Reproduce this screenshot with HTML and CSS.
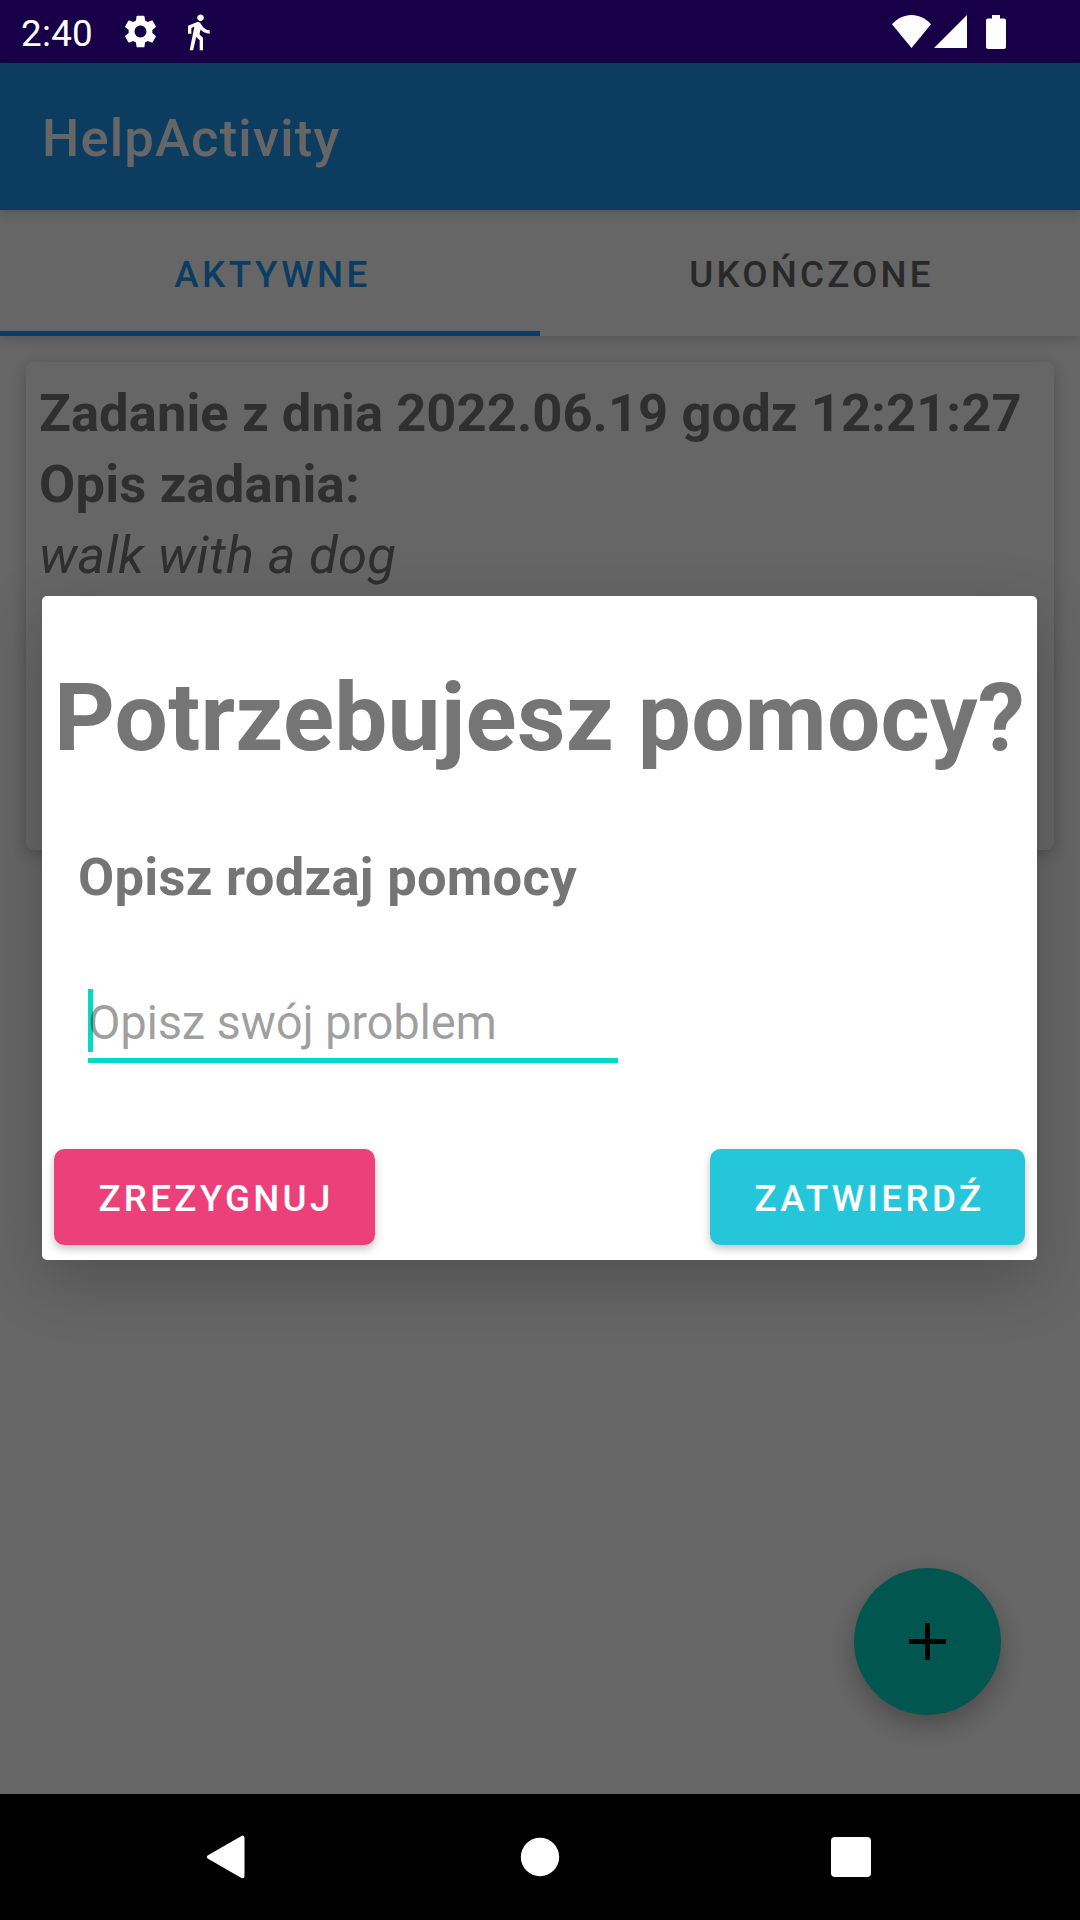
FILE: index.html
```html
<!DOCTYPE html>
<html lang="pl">
<head>
<meta charset="utf-8">
<title>HelpActivity</title>
<link rel="stylesheet" href="styles.css">
</head>
<body>
<div class="screen">
  <header class="status-bar">
    <span class="clock">2:40</span>
    <svg class="gear" viewBox="2 2 20 20"><path d="M19.14 12.94c.04-.3.06-.61.06-.94 0-.32-.02-.64-.07-.94l2.03-1.58c.18-.14.23-.41.12-.61l-1.92-3.32c-.12-.22-.37-.29-.59-.22l-2.39.96c-.5-.38-1.03-.7-1.62-.94l-.36-2.54c-.04-.24-.24-.41-.48-.41h-3.84c-.24 0-.43.17-.47.41l-.36 2.54c-.59.24-1.13.57-1.62.94l-2.39-.96c-.22-.08-.47 0-.59.22L2.74 8.87c-.12.21-.08.47.12.61l2.03 1.58c-.05.3-.09.63-.09.94s.02.64.07.94l-2.03 1.58c-.18.14-.23.41-.12.61l1.92 3.32c.12.22.37.29.59.22l2.39-.96c.5.38 1.03.7 1.62.94l.36 2.54c.05.24.24.41.48.41h3.84c.24 0 .44-.17.47-.41l.36-2.54c.59-.24 1.13-.56 1.62-.94l2.39.96c.22.08.47 0 .59-.22l1.92-3.32c.12-.22.07-.47-.12-.61l-2.01-1.58zM12 15.6c-1.98 0-3.6-1.62-3.6-3.6s1.62-3.6 3.6-3.6 3.6 1.62 3.6 3.6-1.62 3.6-3.6 3.6z"/></svg>
    <svg class="walk" viewBox="0 0 24 24"><path d="M13.5 5.5c1.1 0 2-.9 2-2s-.9-2-2-2-2 .9-2 2 .9 2 2 2zM9.8 8.9L7 23h2.1l1.8-8 2.1 2v6h2v-7.500l-2.1-2 .6-3C14.800 12 16.800 13 19 13v-2c-1.900 0-3.500-1-4.300-2.400l-1-1.600c-.4-.6-1-1-1.700-1-.3 0-.5.1-.8.1L6 8.300V13h2V9.600l1.800-.7"/></svg>
    <div class="indicators">
      <svg class="wifi" viewBox="0 0 39 33"><path d="M0 9.300C5 3.500 12 0 19.500 0S34 3.500 39 9.300L19.500 33z"/></svg>
      <svg class="signal" viewBox="0 0 33 33"><path d="M0 33L33 0v33z"/></svg>
      <svg class="battery" viewBox="0 0 20 34"><path d="M6 0h8v3.400h4q2 0 2 2V32q0 2-2 2H2q-2 0-2-2V5.400q0-2 2-2h4z"/></svg>
    </div>
  </header>

  <div class="window">
    <main class="activity">
      <div class="app-bar"><h1 class="app-title">HelpActivity</h1></div>
      <nav class="tabs">
        <div class="tab tab-active">AKTYWNE</div>
        <div class="tab">UKOŃCZONE</div>
      </nav>
      <div class="content">
        <article class="card">
          <p class="card-date">Zadanie z dnia 2022.06.19 godz 12:21:27</p>
          <p class="card-heading">Opis zadania:</p>
          <p class="card-note">walk with a dog</p>
        </article>
      </div>
      <div class="fab"><svg class="plus" viewBox="0 0 37 37"><path d="M16 0h5v16h16v5H21v16h-5V21H0v-5h16z"/></svg></div>
    </main>
    <div class="scrim">
      <section class="dialog">
        <h2 class="dialog-title">Potrzebujesz pomocy?</h2>
        <p class="dialog-label">Opisz rodzaj pomocy</p>
        <div class="field"><span class="hint">Opisz swój problem</span></div>
        <div class="actions">
          <div class="button button-cancel">ZREZYGNUJ</div>
          <div class="button button-confirm">ZATWIERDŹ</div>
        </div>
      </section>
    </div>
  </div>

  <footer class="nav-bar">
    <svg class="nav-icon" viewBox="0 0 44 44"><path d="M5 22L38.500 2.700v38.600z" stroke="#fff" stroke-width="4" stroke-linejoin="round"/></svg>
    <svg class="nav-icon" viewBox="0 0 44 44"><circle cx="22" cy="22" r="19.200"/></svg>
    <svg class="nav-icon" viewBox="0 0 44 44"><rect x="2" y="2" width="40" height="40" rx="4"/></svg>
  </footer>
</div>
</body>
</html>
```
FILE: styles.css
```css
* { box-sizing: border-box; }

body {
  margin: 0;
  font-family: Roboto, "Noto Sans", sans-serif;
  background: #000;
}

h1, h2, p { margin: 0; }

svg { display: block; fill: #fff; flex: none; }

.screen {
  width: 1080px;
  height: 1920px;
  display: flex;
  flex-direction: column;
  overflow: hidden;
}

/* status bar */
.status-bar {
  height: 63px;
  flex: none;
  display: flex;
  align-items: center;
  padding: 0 74px 0 21px;
  background: #180048;
}

.clock {
  width: 103px;
  padding-top: 4px;
  font-size: 36.75px;
  line-height: 59px;
  letter-spacing: .3px;
  color: #fff;
}

.gear { width: 33px; height: 33px; }
.walk { width: 40px; height: 40px; margin: 1px 0 0 21px; }

.indicators {
  display: flex;
  align-items: center;
  margin: -1px 0 0 auto;
}

.wifi { width: 39px; height: 33px; }
.signal { width: 33px; height: 33px; margin-left: 3px; }
.battery { width: 20px; height: 34px; margin: 1px 0 0 19px; }

/* activity behind the dialog */
.window {
  position: relative;
  flex: 1;
  display: flex;
}

.activity {
  position: relative;
  flex: 1;
  display: flex;
  flex-direction: column;
  background: #fff;
}

.app-bar {
  position: relative;
  z-index: 2;
  height: 147px;
  padding: 4px 42px 0;
  background: #2196f3;
  box-shadow: 0 3px 12px rgba(0, 0, 0, .18);
}

.app-title {
  font-size: 52.5px;
  font-weight: 500;
  line-height: 142px;
  letter-spacing: 1.2px;
  color: #fff;
}

.tabs {
  position: relative;
  z-index: 1;
  height: 126px;
  display: flex;
  background: #fff;
  box-shadow: 0 3px 12px rgba(0, 0, 0, .17);
}

.tab {
  width: 50%;
  padding: 3px 0 0 3px;
  font-size: 36.75px;
  font-weight: 500;
  line-height: 123px;
  letter-spacing: 3.15px;
  text-align: center;
  color: #666;
}

.tab-active {
  padding-left: 5px;
  letter-spacing: 3.5px;
  color: #2196f3;
  box-shadow: inset 0 -5px #2196f3;
}

.content { padding: 26px; }

.card {
  height: 488px;
  padding: 16px 13px;
  border-radius: 8px;
  background: #fff;
  box-shadow: 0 4px 16px rgba(0, 0, 0, .24);
  font-size: 52.5px;
  line-height: 71px;
  color: #757575;
  white-space: nowrap;
}

.card-date { font-weight: 700; letter-spacing: .07px; }
.card-heading { font-weight: 700; letter-spacing: .2px; }
.card-note { font-style: italic; letter-spacing: .33px; }

.fab {
  position: absolute;
  right: 79px;
  bottom: 79px;
  width: 147px;
  height: 147px;
  display: flex;
  align-items: center;
  justify-content: center;
  border-radius: 50%;
  background: #03dac5;
  box-shadow: 0 10px 26px rgba(0, 0, 0, .28);
}

.plus { width: 37px; height: 37px; fill: #000; }

/* dialog */
.scrim {
  position: absolute;
  inset: 0;
  z-index: 3;
  display: flex;
  align-items: center;
  justify-content: center;
  padding: 0 1px 1px 0;
  background: rgba(0, 0, 0, .6);
}

.dialog {
  width: 995px;
  height: 664px;
  display: flex;
  flex-direction: column;
  padding: 72px 12px 15px;
  border-radius: 5px;
  background: #fff;
  box-shadow: 0 20px 64px rgba(0, 0, 0, .22);
  color: #757575;
}

.dialog-title {
  font-size: 94.5px;
  font-weight: 700;
  line-height: 100px;
  letter-spacing: .26px;
  white-space: nowrap;
}

.dialog-label {
  margin: 79px 0 0 24px;
  font-size: 52.5px;
  font-weight: 700;
  line-height: 60px;
  letter-spacing: .28px;
}

.field {
  width: 530px;
  height: 74px;
  margin: 82px 0 0 34px;
  border-bottom: 5px solid #03dac5;
  background: linear-gradient(#03dac5, #03dac5) 0 0 / 5px 63px no-repeat;
}

.hint {
  display: block;
  font-size: 47.25px;
  line-height: 68px;
  letter-spacing: -.27px;
  color: rgba(0, 0, 0, .38);
}

.actions {
  display: flex;
  justify-content: space-between;
  margin-top: auto;
}

.button {
  height: 96px;
  padding: 3px 0 0 3px;
  border-radius: 10.5px;
  font-size: 36.75px;
  font-weight: 500;
  line-height: 93px;
  letter-spacing: 3.28px;
  text-align: center;
  color: #fff;
  box-shadow: 0 4px 8px rgba(0, 0, 0, .24);
}

.button-cancel { width: 321px; background: #ec407a; }
.button-confirm { width: 315px; padding-left: 4px; letter-spacing: 3.4px; background: #26c6da; }

/* system navigation */
.nav-bar {
  height: 126px;
  flex: none;
  display: flex;
  align-items: center;
  gap: 269px;
  padding-left: 204px;
  background: #000;
}

.nav-icon { width: 44px; height: 44px; }
.nav-icon:nth-child(2) { margin-left: 1px; }
.nav-icon:nth-child(3) { margin-left: -2px; }
```
